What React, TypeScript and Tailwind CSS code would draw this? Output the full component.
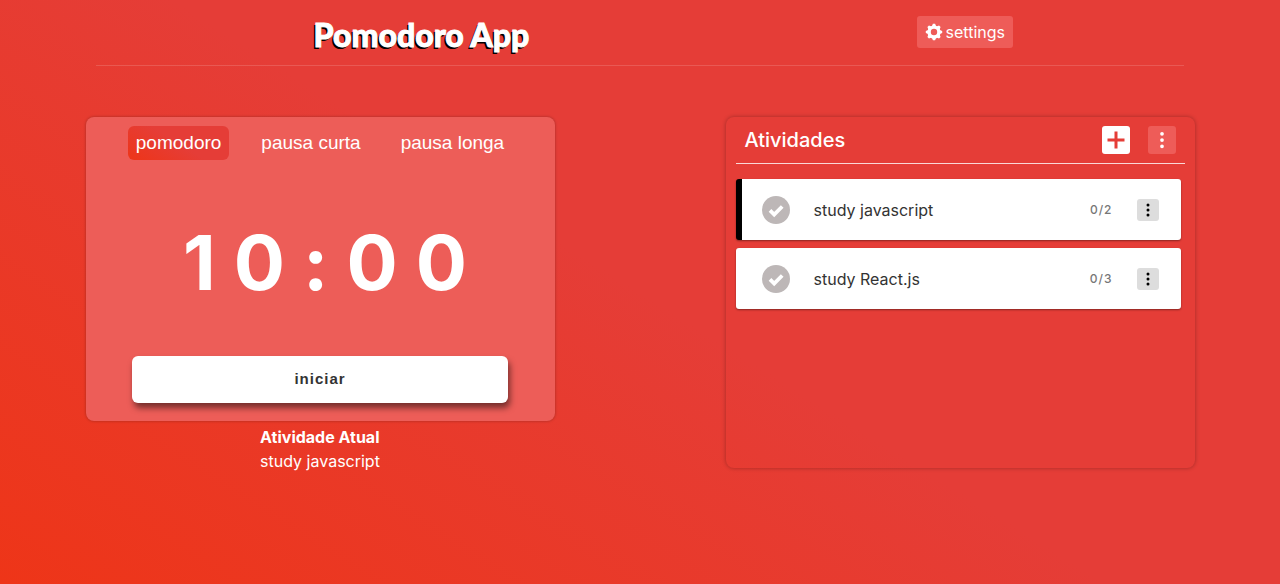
import { useState } from "react";
import { BsThreeDotsVertical } from "react-icons/bs";

const tabs = ["pomodoro", "pausa curta", "pausa longa"];

const tasks = [
  { name: "study javascript", progress: "0/2" },
  { name: "study React.js", progress: "0/3" },
];

function CheckIcon() {
  return (
    <svg viewBox="0 0 28 28" className="size-7" aria-hidden="true">
      <circle cx="14" cy="14" r="14" fill="#bdb7b7" />
      <path d="M8 14.4l4.2 4.1 8-8" fill="none" stroke="#fff" strokeWidth="3.8" />
    </svg>
  );
}

function PlusIcon() {
  return (
    <svg viewBox="0 0 18 18" className="size-[18px]" aria-hidden="true">
      <path d="M9 0.5v17M0.5 9h17" stroke="#e53d37" strokeWidth="3" />
    </svg>
  );
}

const teeth = [0, 45, 90, 135, 180, 225, 270, 315];

function GearIcon() {
  return (
    <svg viewBox="0 0 18 18" className="size-[18px]" aria-hidden="true">
      <circle cx="9" cy="9" r="4.9" fill="none" stroke="#fff" strokeWidth="3.4" />
      {teeth.map((angle) => (
        <path key={angle} d="M6.9 3.2L7.9 0.8h2.2l1 2.4z" fill="#fff" transform={`rotate(${angle} 9 9)`} />
      ))}
    </svg>
  );
}

export default function App() {
  const [tab, setTab] = useState(tabs[0]);
  const [current, setCurrent] = useState(tasks[0].name);

  return (
    <div className="min-h-screen bg-[linear-gradient(32deg,#ee3518,#e53d37_50%)] font-['Inter',sans-serif] text-white">
      <header className="mx-auto flex w-[85%] border-b border-white/15">
        <div className="flex h-[65px] w-full items-start justify-between pr-[171px] pl-[20%]">
          <h1 className="pt-[15px] font-[Lato,sans-serif] text-[32px] leading-10 font-black whitespace-nowrap [-webkit-text-stroke:1px_#fff] [text-shadow:-2px_2px_0_#000]">
            Pomodoro App
          </h1>
          <button className="mt-4 flex h-8 items-center gap-[3px] rounded-[3px] bg-[#ee5c58] px-2 text-base">
            <GearIcon />
            settings
          </button>
        </div>
      </header>

      <main className="flex flex-wrap items-start justify-around gap-y-8 pt-[51px] pb-8">
        <section className="flex w-[469px] flex-col items-center">
          <div className="flex w-full flex-col items-center rounded-lg bg-[#ed5d58] pt-[9px] pb-[18px] shadow-[0_0_3px_rgba(0,0,0,0.3)]">
            <div className="flex gap-6 font-['Liberation_Sans',sans-serif] text-[19px]">
              {tabs.map((t) => (
                <button
                  key={t}
                  onClick={() => setTab(t)}
                  className={
                    t === tab
                      ? "h-[34px] rounded-md bg-[linear-gradient(32deg,#ee3518,#e53d37_50%)] px-2"
                      : "h-[34px] rounded-md px-2"
                  }
                >
                  {t}
                </button>
              ))}
            </div>
            <div className="mt-[42px] mb-[34px] pl-7 text-[76px] leading-[120px] font-bold tracking-[18px]">
              10:00
            </div>
            <button className="h-[47px] w-4/5 rounded-md bg-white font-['Liberation_Sans',sans-serif] text-[15px] font-bold tracking-[1px] text-[#333] shadow-[2px_5px_6px_rgba(0,0,0,0.5)]">
              iniciar
            </button>
          </div>
          <div className="mt-1 leading-6">
            <h2 className="text-base leading-6 font-bold">Atividade Atual</h2>
            <p className="text-base leading-6">{current}</p>
          </div>
        </section>

        <section className="min-h-[351px] w-[469px] rounded-lg px-[10px] shadow-[0_0_4px_rgba(0,0,0,0.3)]">
          <div className="flex h-[47px] items-center gap-[18px] border-b border-white/80 pr-[9px] pl-[9px]">
            <h2 className="flex-1 text-[20px] font-medium">Atividades</h2>
            <button aria-label="Adicionar" className="flex size-7 items-center justify-center rounded-[3px] bg-white">
              <PlusIcon />
            </button>
            <button aria-label="Menu" className="flex size-7 items-center justify-center rounded-[3px] bg-[#ee5c58]">
              <BsThreeDotsVertical className="size-5" />
            </button>
          </div>
          <ul className="mt-[15px] mr-1 flex flex-col gap-2">
            {tasks.map((task) => (
              <li
                key={task.name}
                className={
                  task.name === current
                    ? "flex h-[61px] items-center rounded-[3px] border-l-[6px] border-black bg-white pr-[22px] pl-5 text-[#333] shadow-[0_1px_2px_rgba(0,0,0,0.4)]"
                    : "flex h-[61px] items-center rounded-[3px] border-l-[6px] border-white bg-white pr-[22px] pl-5 text-[#333] shadow-[0_1px_2px_rgba(0,0,0,0.4)]"
                }
              >
                <button aria-label="Concluir">
                  <CheckIcon />
                </button>
                <button onClick={() => setCurrent(task.name)} className="ml-6 flex-1 text-left text-base">
                  {task.name}
                </button>
                <span className="text-xs font-medium tracking-[1px] text-[#777]">{task.progress}</span>
                <button
                  aria-label="Opções"
                  className="ml-6 flex size-[22px] items-center justify-center rounded-[3px] bg-[#ddd] text-black"
                >
                  <BsThreeDotsVertical className="size-4" />
                </button>
              </li>
            ))}
          </ul>
        </section>
      </main>
    </div>
  );
}
